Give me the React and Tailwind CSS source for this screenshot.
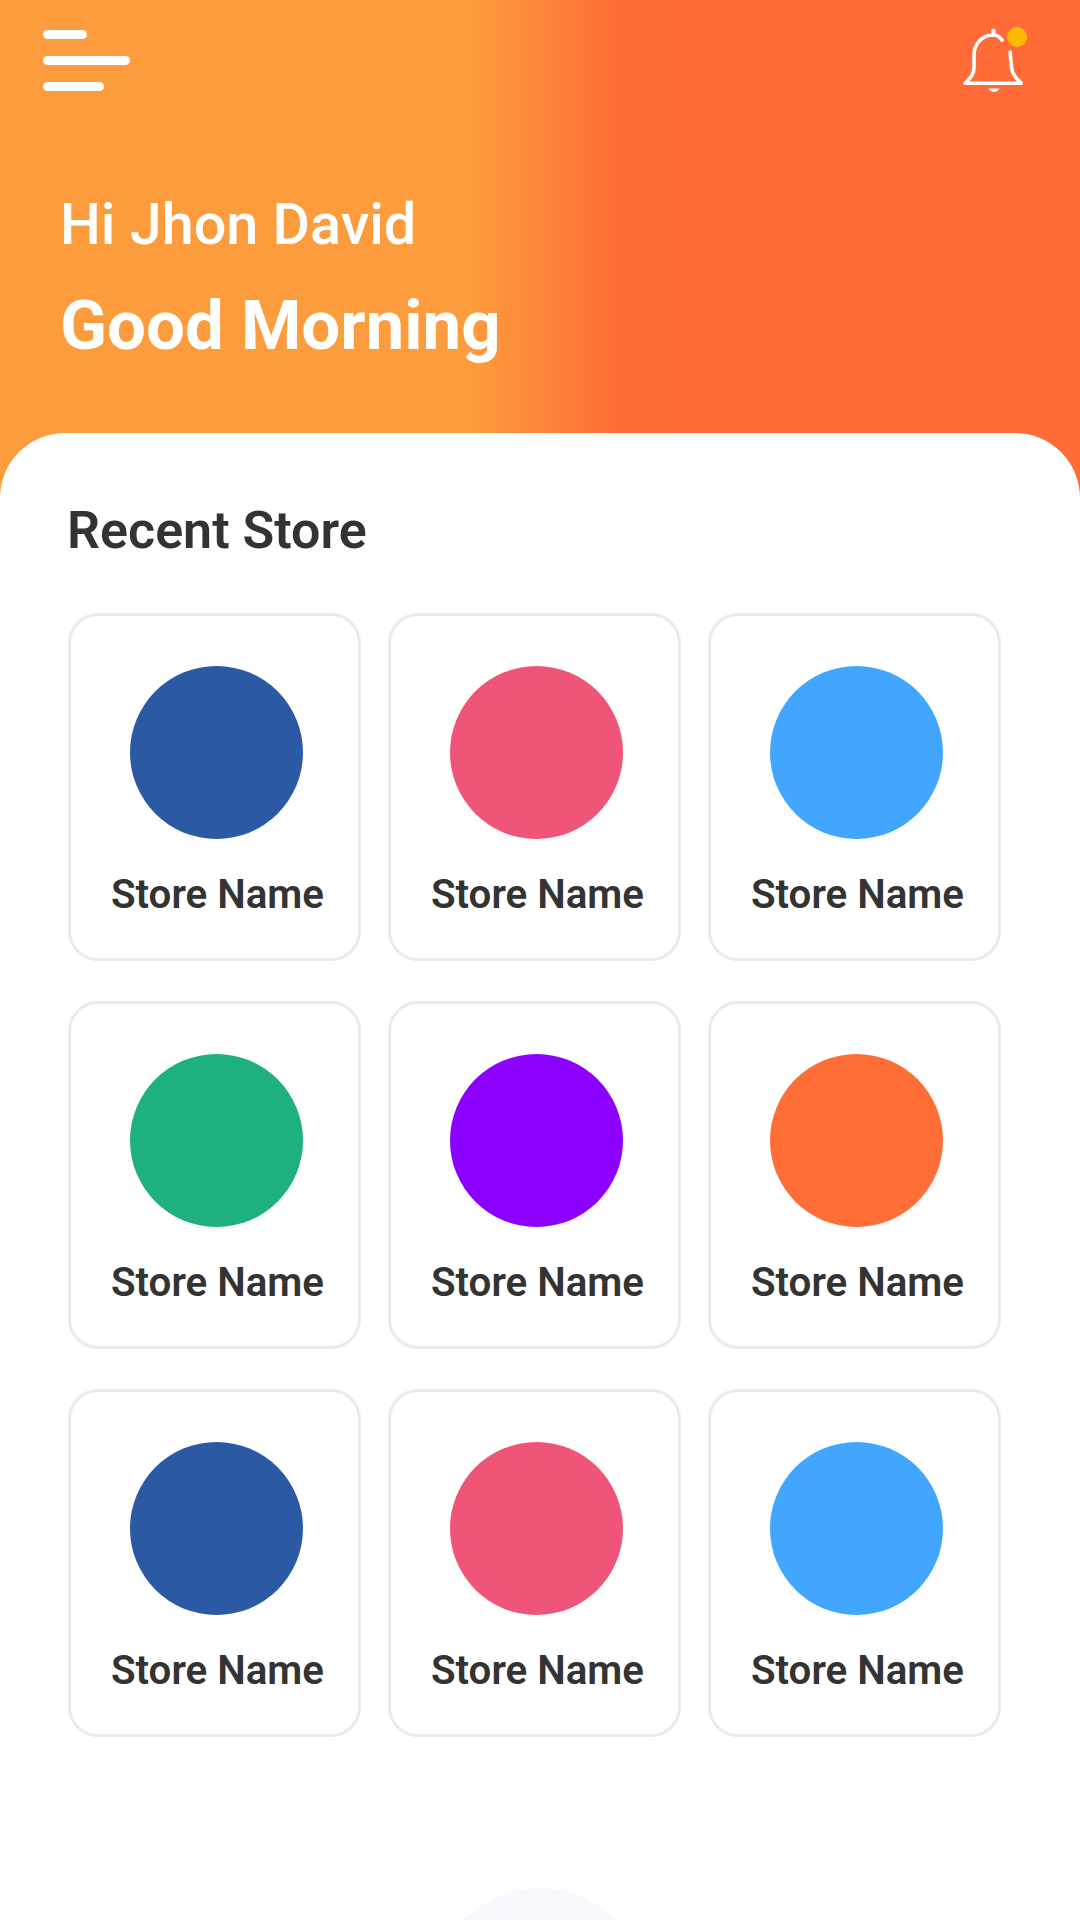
const stores = [
  "bg-[#2c59a3]", "bg-[#ef5579]", "bg-[#42a6ff]",
  "bg-[#1fb082]", "bg-[#8c00ff]", "bg-[#ff6e37]",
  "bg-[#2c59a3]", "bg-[#ef5579]", "bg-[#42a6ff]",
];

function Bell() {
  return (
    <div className="relative w-[72px] h-[72px]">
      <svg width="72" height="72" viewBox="0 0 72 72" fill="none" stroke="#fff" strokeWidth="3.6" strokeLinecap="round" strokeLinejoin="round">
        <path d="M33.300 7v4" strokeWidth="4.500" />
        <path d="M42 16c-2.500-3.500-5-5-8.700-5C22 11 14 20 14 31v12c0 7-3 10-8.700 16.300h56c-6-6.300-9.300-9.300-9.800-16.300L50 28" />
        <path d="M28.300 64.500h11.400c-1.700 2.500-3.500 3.500-5.700 3.500s-4-1-5.700-3.500z" fill="#fff" stroke="none" />
      </svg>
      <span className="absolute left-[47px] top-[3px] w-[20px] h-[20px] rounded-full bg-[#ffb905]" />
    </div>
  );
}

function StoreCard({ color }) {
  return (
    <div className="h-[348px] rounded-[30px] border-[3px] border-[#ebebeb] bg-white flex flex-col items-center pt-[50px]">
      <div className={`ml-[3px] w-[173px] h-[173px] rounded-full ${color}`} />
      <p className="ml-[6px] mt-[30px] text-[40.300px] leading-[52px] font-semibold text-[#333333]">Store Name</p>
    </div>
  );
}

export default function App() {
  return (
    <div className="relative w-[1080px] h-[1920px] overflow-hidden bg-white font-['Roboto',sans-serif]">
      <header className="h-[500px] bg-[linear-gradient(90deg,#fd9c3c_0%,#fd9c3c_43.500%,#ff6d37_57%,#ff6c37_100%)]">
        <div className="flex items-center justify-between pl-[43px] pr-[48px] pt-[24px]">
          <div className="flex flex-col gap-[17px]">
            <span className="block w-[44px] h-[9px] rounded-full bg-white" />
            <span className="block w-[87px] h-[9px] rounded-full bg-white" />
            <span className="block w-[61px] h-[9px] rounded-full bg-white" />
          </div>
          <Bell />
        </div>
        <div className="pl-[60px] pt-[95px] text-white">
          <p className="text-[57.500px] leading-[68px] font-medium">Hi Jhon David</p>
          <p className="mt-[26px] text-[69px] leading-[82px] font-bold">Good Morning</p>
        </div>
      </header>

      <main className="relative -mt-[67px] bg-white rounded-t-[65px] pl-[67px] pr-[79px] pt-[67px]">
        <h2 className="text-[52px] leading-[62px] font-semibold text-[#333333]">Recent Store</h2>
        <div className="mt-[51px] ml-px grid grid-cols-3 gap-x-[27px] gap-y-[40px]">
          {stores.map((color, i) => (
            <StoreCard key={i} color={color} />
          ))}
        </div>
      </main>

      <div className="absolute left-[434px] top-[1888px] w-[212px] h-[212px] rounded-full bg-[#f9f8ff]" />
    </div>
  );
}
